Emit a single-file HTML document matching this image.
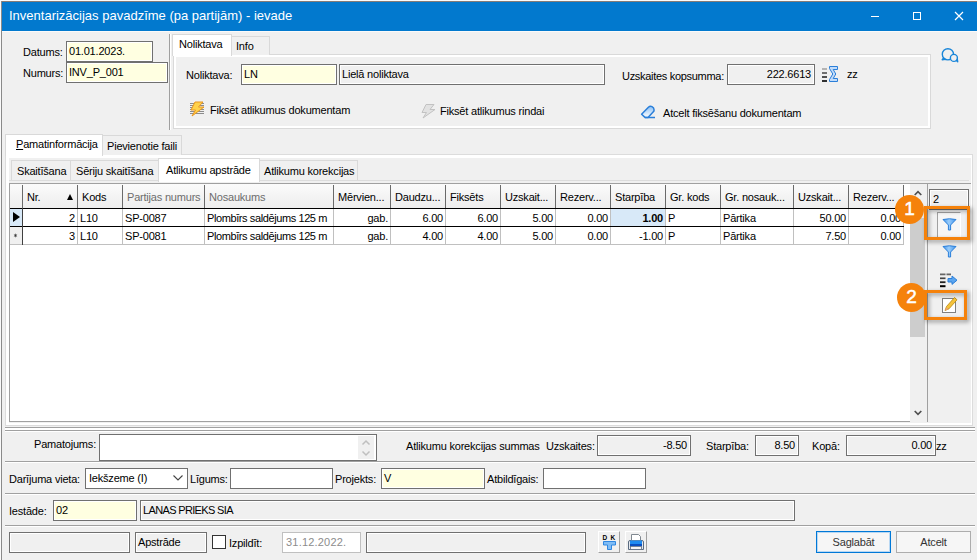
<!DOCTYPE html>
<html lang="lv">
<head>
<meta charset="utf-8">
<title>Inventarizācijas pavadzīme (pa partijām) - ievade</title>
<style>
*{box-sizing:border-box;margin:0;padding:0}
html,body{width:977px;height:560px;overflow:hidden;background:#f0f0f0}
body{position:relative;font-family:"Liberation Sans","DejaVu Sans",sans-serif;font-size:11px;color:#000;line-height:13px;letter-spacing:-0.2px}
.abs{position:absolute}
#win{position:absolute;left:0;top:0;width:977px;height:560px;background:#f0f0f0}
#title{position:absolute;left:0;top:0;width:977px;height:31px;background:#0279ce;color:#fff}
#title .t{position:absolute;left:9px;top:8px;font-size:13px;line-height:15px;white-space:nowrap;letter-spacing:0}
.lbl{position:absolute;white-space:nowrap;height:13px;line-height:13px}
.inp{position:absolute;height:21px;border:1px solid #707070;box-shadow:inset 0 0 0 1px #fff;background:#fff;padding:3px 0 0 2px;white-space:nowrap;overflow:hidden;line-height:13px}
.y{background:#ffffe1}
.g{background:#f0f0f0}
.r{text-align:right;padding-right:3px}
.hsep{position:absolute;left:5px;width:970px;height:2px;border-top:1px solid #a0a0a0;border-bottom:1px solid #fff}
.tab{position:absolute;border:1px solid #d9d9d9;border-bottom:none;background:#f0f0f0;white-space:nowrap;padding:3px 0 0 5px;height:20px}
.tab.sel{background:#fff;z-index:2}
#grid>div{position:absolute}
.gh{background:linear-gradient(#fbfbfb,#f4f4f4 50%,#eeeeee)}
.hc{top:0;height:24px;line-height:13px;padding:7px 0 0 4px;white-space:nowrap;overflow:hidden}
.c{height:17px;line-height:13px;padding:3px 0 0 2px;white-space:nowrap;overflow:hidden}
.c.r{text-align:right;padding-right:2px}
.vl{width:1px;background:#c0c0c0}
.hl{left:0;height:1px}
.call{width:29px;height:29px;border-radius:50%;background:#f5820b;color:#fff;font-size:19px;line-height:28px;text-align:center;letter-spacing:0;z-index:5;-webkit-text-stroke:0.5px #fff}
.btn3{width:22px;height:22px;background:#f0f0f0;border:1px solid #fff;border-right-color:#a0a0a0;border-bottom-color:#a0a0a0}
</style>
</head>
<body>
<div id="win"></div>
<div id="title"><span class="t">Inventarizācijas pavadzīme (pa partijām) - ievade</span>
<svg class="abs" style="left:870px;top:0" width="107" height="31" viewBox="0 0 107 31" fill="none" stroke="#fff" stroke-width="1">
<path d="M1 16.500h8"/><rect x="43.500" y="12.500" width="7" height="7"/><path d="M85 12l8 8M93 12l-8 8" stroke-width="1.200"/></svg>
</div>

<!-- window edges -->
<div class="abs" style="left:0;top:31px;width:977px;height:1px;background:#fafafa"></div>
<div class="abs" style="left:0;top:0;width:977px;height:1px;background:#fafafa;z-index:9"></div>
<div class="abs" style="left:1px;top:1px;width:976px;height:1px;background:#857c78;z-index:9"></div>
<div class="abs" style="left:0;top:0;width:1px;height:560px;background:#fafafa;z-index:9"></div>
<div class="abs" style="left:1px;top:1px;width:1px;height:559px;background:#8a8a8a;z-index:9"></div>
<!-- header left -->
<span class="lbl" style="left:23px;top:46px">Datums:</span>
<div class="inp y" style="left:66px;top:41px;width:87px">01.01.2023.</div>
<span class="lbl" style="left:23px;top:67px">Numurs:</span>
<div class="inp y" style="left:66px;top:62px;width:102px">INV_P_001</div>
<div class="abs" style="left:169px;top:34px;width:2px;height:96px;border-left:1px solid #a0a0a0;border-right:1px solid #fff"></div>

<!-- Noliktava tabs -->
<div class="abs" style="left:173px;top:54px;width:758px;height:75px;background:#fff;border:1px solid #d9d9d9"></div>
<div class="abs" style="left:176px;top:57px;width:752px;height:69px;background:#f0f0f0"></div>
<div class="tab sel" style="left:172px;top:34px;width:60px;height:22px;padding-top:3px;padding-left:6px">Noliktava</div>
<div class="tab" style="left:231px;top:36px;width:39px;height:19px;padding-left:4px;padding-top:3px">Info</div>

<span class="lbl" style="left:186px;top:69px">Noliktava:</span>
<div class="inp y" style="left:241px;top:64px;width:96px">LN</div>
<div class="inp g" style="left:339px;top:64px;width:266px">Lielā noliktava</div>
<span class="lbl" style="left:622px;top:70px;letter-spacing:-0.3px">Uzskaites kopsumma:</span>
<div class="inp g r" style="left:727px;top:64px;width:88px">222.6613</div>
<span class="lbl" style="left:847px;top:68px">zz</span>

<span class="lbl" style="left:210px;top:104px">Fiksēt atlikumus dokumentam</span>
<span class="lbl" style="left:440px;top:105px">Fiksēt atlikumus rindai</span>
<span class="lbl" style="left:663px;top:107px">Atcelt fiksēšanu dokumentam</span>

<!-- main tabs -->
<div class="abs" style="left:5px;top:154px;width:968px;height:272px;background:#fff;border:1px solid #dcdcdc"></div>
<div class="abs" style="left:9px;top:158px;width:962px;height:265px;background:#f0f0f0"></div>
<div class="tab sel" style="left:5px;top:134px;width:98px;height:22px;padding-top:3px;padding-left:10px"><u>P</u>amatinformācija</div>
<div class="tab" style="left:102px;top:135px;width:80px;height:20px;padding-top:4px;padding-left:4px">Pievienotie faili</div>

<!-- inner tabs -->
<div class="tab" style="left:11px;top:160px;width:60px;height:21px;padding-top:4px">Skaitīšana</div>
<div class="tab" style="left:70px;top:160px;width:89px;height:21px;padding-top:4px">Sēriju skaitīšana</div>
<div class="tab sel" style="left:158px;top:158px;width:102px;height:24px;padding-top:5px;padding-left:7px">Atlikumu apstrāde</div>
<div class="tab" style="left:258px;top:160px;width:100px;height:21px;padding-top:4px">Atlikumu korekcijas</div>
<div class="abs" style="left:9px;top:180px;width:960px;height:1px;background:#dcdcdc;z-index:1"></div>
<div class="abs" style="left:9px;top:183px;width:962px;height:1px;background:#a0a0a0"></div>

<!-- grid -->
<div id="grid" class="abs" style="left:9px;top:183px;width:919px;height:239px;background:#fff;border:1px solid #a0a0a0">
<!--GRID-->
<div class="gh" style="left:0;top:0;width:894px;height:24px"></div>
<div class="hc" style="left:13px;width:54px;color:#000">Nr.</div>
<div class="hc" style="left:68px;width:44px;color:#000">Kods</div>
<div class="hc" style="left:113px;width:81px;color:#6d6d6d">Partijas numurs</div>
<div class="hc" style="left:195px;width:128px;color:#6d6d6d">Nosaukums</div>
<div class="hc" style="left:324px;width:56px;color:#000">Mērvien...</div>
<div class="hc" style="left:381px;width:54px;color:#000">Daudzu...</div>
<div class="hc" style="left:436px;width:54px;color:#000">Fiksēts</div>
<div class="hc" style="left:491px;width:54px;color:#000">Uzskait...</div>
<div class="hc" style="left:546px;width:54px;color:#000">Rezerv...</div>
<div class="hc" style="left:601px;width:54px;color:#000">Starpība</div>
<div class="hc" style="left:656px;width:54px;color:#000">Gr. kods</div>
<div class="hc" style="left:711px;width:72px;color:#000">Gr. nosauk...</div>
<div class="hc" style="left:784px;width:54px;color:#000">Uzskait...</div>
<div class="hc" style="left:839px;width:54px;color:#000">Rezerv...</div>
<div class="vl" style="left:12px;top:1px;height:23px;background:#6a6a6a"></div>
<div class="vl" style="left:67px;top:1px;height:23px;background:#6a6a6a"></div>
<div class="vl" style="left:112px;top:1px;height:23px;background:#6a6a6a"></div>
<div class="vl" style="left:194px;top:1px;height:23px;background:#6a6a6a"></div>
<div class="vl" style="left:323px;top:1px;height:23px;background:#6a6a6a"></div>
<div class="vl" style="left:380px;top:1px;height:23px;background:#6a6a6a"></div>
<div class="vl" style="left:435px;top:1px;height:23px;background:#6a6a6a"></div>
<div class="vl" style="left:490px;top:1px;height:23px;background:#6a6a6a"></div>
<div class="vl" style="left:545px;top:1px;height:23px;background:#6a6a6a"></div>
<div class="vl" style="left:600px;top:1px;height:23px;background:#6a6a6a"></div>
<div class="vl" style="left:655px;top:1px;height:23px;background:#6a6a6a"></div>
<div class="vl" style="left:710px;top:1px;height:23px;background:#6a6a6a"></div>
<div class="vl" style="left:783px;top:1px;height:23px;background:#6a6a6a"></div>
<div class="vl" style="left:838px;top:1px;height:23px;background:#6a6a6a"></div>
<div class="vl" style="left:893px;top:1px;height:23px;background:#6a6a6a"></div>
<div style="left:57px;top:10px;width:0;height:0;border-left:3.5px solid transparent;border-right:3.5px solid transparent;border-bottom:6px solid #000"></div>
<div class="c r" style="left:13px;top:25px;width:54px">2</div>
<div class="c" style="left:68px;top:25px;width:44px">L10</div>
<div class="c" style="left:113px;top:25px;width:81px">SP-0087</div>
<div class="c" style="left:195px;top:25px;width:128px;letter-spacing:-0.4px">Plombīrs saldējums 125 m</div>
<div class="c r" style="left:324px;top:25px;width:56px">gab.</div>
<div class="c r" style="left:381px;top:25px;width:54px">6.00</div>
<div class="c r" style="left:436px;top:25px;width:54px">6.00</div>
<div class="c r" style="left:491px;top:25px;width:54px">5.00</div>
<div class="c r" style="left:546px;top:25px;width:54px">0.00</div>
<div class="c r" style="left:601px;top:25px;width:54px;background:#d8e9f8;font-weight:bold">1.00</div>
<div class="c" style="left:656px;top:25px;width:54px">P</div>
<div class="c" style="left:711px;top:25px;width:72px">Pārtika</div>
<div class="c r" style="left:784px;top:25px;width:54px">50.00</div>
<div class="c r" style="left:839px;top:25px;width:54px">0.00</div>
<div class="vl" style="left:12px;top:25px;height:17px"></div>
<div class="vl" style="left:67px;top:25px;height:17px"></div>
<div class="vl" style="left:112px;top:25px;height:17px"></div>
<div class="vl" style="left:194px;top:25px;height:17px"></div>
<div class="vl" style="left:323px;top:25px;height:17px"></div>
<div class="vl" style="left:380px;top:25px;height:17px"></div>
<div class="vl" style="left:435px;top:25px;height:17px"></div>
<div class="vl" style="left:490px;top:25px;height:17px"></div>
<div class="vl" style="left:545px;top:25px;height:17px"></div>
<div class="vl" style="left:600px;top:25px;height:17px"></div>
<div class="vl" style="left:655px;top:25px;height:17px"></div>
<div class="vl" style="left:710px;top:25px;height:17px"></div>
<div class="vl" style="left:783px;top:25px;height:17px"></div>
<div class="vl" style="left:838px;top:25px;height:17px"></div>
<div class="vl" style="left:893px;top:25px;height:17px"></div>
<div class="c r" style="left:13px;top:43px;width:54px">3</div>
<div class="c" style="left:68px;top:43px;width:44px">L10</div>
<div class="c" style="left:113px;top:43px;width:81px">SP-0081</div>
<div class="c" style="left:195px;top:43px;width:128px;letter-spacing:-0.4px">Plombīrs saldējums 125 m</div>
<div class="c r" style="left:324px;top:43px;width:56px">gab.</div>
<div class="c r" style="left:381px;top:43px;width:54px">4.00</div>
<div class="c r" style="left:436px;top:43px;width:54px">4.00</div>
<div class="c r" style="left:491px;top:43px;width:54px">5.00</div>
<div class="c r" style="left:546px;top:43px;width:54px">0.00</div>
<div class="c r" style="left:601px;top:43px;width:54px">-1.00</div>
<div class="c" style="left:656px;top:43px;width:54px">P</div>
<div class="c" style="left:711px;top:43px;width:72px">Pārtika</div>
<div class="c r" style="left:784px;top:43px;width:54px">7.50</div>
<div class="c r" style="left:839px;top:43px;width:54px">0.00</div>
<div class="vl" style="left:12px;top:43px;height:17px"></div>
<div class="vl" style="left:67px;top:43px;height:17px"></div>
<div class="vl" style="left:112px;top:43px;height:17px"></div>
<div class="vl" style="left:194px;top:43px;height:17px"></div>
<div class="vl" style="left:323px;top:43px;height:17px"></div>
<div class="vl" style="left:380px;top:43px;height:17px"></div>
<div class="vl" style="left:435px;top:43px;height:17px"></div>
<div class="vl" style="left:490px;top:43px;height:17px"></div>
<div class="vl" style="left:545px;top:43px;height:17px"></div>
<div class="vl" style="left:600px;top:43px;height:17px"></div>
<div class="vl" style="left:655px;top:43px;height:17px"></div>
<div class="vl" style="left:710px;top:43px;height:17px"></div>
<div class="vl" style="left:783px;top:43px;height:17px"></div>
<div class="vl" style="left:838px;top:43px;height:17px"></div>
<div class="vl" style="left:893px;top:43px;height:17px"></div>
<div style="left:0;top:25px;width:12px;height:17px;background:#d8e9f8"></div>
<div style="left:0;top:43px;width:12px;height:17px;background:#f0f0f0"></div>
<div class="hl" style="top:24px;width:894px;background:#000"></div>
<div class="hl" style="top:42px;width:894px;background:#000"></div>
<div class="hl" style="top:60px;width:894px;background:#c0c0c0"></div>
<div class="vl" style="left:12px;top:24px;height:37px;background:#404040"></div>
<div style="left:3px;top:28px;width:0;height:0;border-top:5px solid transparent;border-bottom:5px solid transparent;border-left:7.5px solid #000"></div>
<svg style="position:absolute;left:3px;top:49px" width="5" height="5" viewBox="0 0 7 7" stroke="#333" stroke-width="1" fill="none"><path d="M3.500 1V6M1.300 2.200L5.700 4.800M5.700 2.200L1.300 4.800"/></svg>
<!--/GRID-->
<div style="left:900px;top:0;width:17px;height:238px;background:#f0f0f0"></div>
<div style="left:900px;top:34px;width:15px;height:119px;background:#cdcdcd"></div>
<svg style="position:absolute;left:900px;top:0" width="17" height="238" viewBox="0 0 17 238" fill="none" stroke="#505050" stroke-width="1.700"><path d="M4.700 11L8 7.700L11.300 11M4.700 227L8 230.300L11.300 227"/></svg>

</div>

<!-- bottom -->
<div class="hsep" style="top:427px"></div>
<div class="abs" style="left:5px;top:429px;width:970px;height:1px;background:#fff"></div>
<div class="hsep" style="top:430px"></div>
<span class="lbl" style="left:34px;top:438px">Pamatojums:</span>
<div class="inp" style="left:99px;top:434px;width:278px;height:27px"></div>
<span class="lbl" style="left:406px;top:440px">Atlikumu korekcijas summas</span>
<span class="lbl" style="left:546px;top:440px">Uzskaites:</span>
<div class="inp g r" style="left:597px;top:435px;width:94px">-8.50</div>
<span class="lbl" style="left:706px;top:440px">Starpība:</span>
<div class="inp g r" style="left:755px;top:435px;width:44px">8.50</div>
<span class="lbl" style="left:812px;top:440px">Kopā:</span>
<div class="inp g r" style="left:846px;top:435px;width:90px">0.00</div>
<span class="lbl" style="left:936px;top:440px">zz</span>

<div class="hsep" style="top:461px"></div>
<span class="lbl" style="left:9px;top:473px">Darījuma vieta:</span>
<div class="inp" style="left:85px;top:468px;width:103px;padding-left:3px">Iekšzeme (I)</div>
<span class="lbl" style="left:190px;top:473px">Līgums:</span>
<div class="inp" style="left:230px;top:468px;width:103px"></div>
<span class="lbl" style="left:335px;top:473px">Projekts:</span>
<div class="inp y" style="left:381px;top:468px;width:104px">V</div>
<span class="lbl" style="left:487px;top:473px">Atbildīgais:</span>
<div class="inp" style="left:543px;top:468px;width:103px"></div>

<div class="hsep" style="top:493px"></div>
<span class="lbl" style="left:9px;top:505px">Iestāde:</span>
<div class="inp y" style="left:53px;top:500px;width:84px">02</div>
<div class="inp g" style="left:140px;top:500px;width:655px;letter-spacing:-0.65px">LANAS PRIEKS SIA</div>

<div class="hsep" style="top:525px"></div>
<div class="inp g" style="left:9px;top:532px;width:121px"></div>
<div class="inp g" style="left:135px;top:532px;width:72px">Apstrāde</div>
<div class="abs" style="left:212px;top:535px;width:14px;height:14px;border:1px solid #333;background:#fff"></div>
<span class="lbl" style="left:229px;top:537px">Izpildīt:</span>
<div class="inp" style="left:282px;top:532px;width:79px;color:#8c8c8c;border-color:#c0c0c0;letter-spacing:0.2px;padding-left:3px">31.12.2022.</div>
<div class="inp g" style="left:366px;top:532px;width:220px"></div>
<div class="abs" style="left:816px;top:531px;width:75px;height:22px;border:1px solid #0078d7;box-shadow:inset 0 0 0 1px #b9d8f3;background:#f6f6f6;color:#333;text-align:center;padding-top:4px">Saglabāt</div>
<div class="abs" style="left:896px;top:531px;width:75px;height:22px;border:1px solid #adadad;background:#f6f6f6;color:#333;text-align:center;padding-top:4px">Atcelt</div>

<!-- ICONS -->
<svg class="abs" style="left:940px;top:46px" width="22" height="18" viewBox="0 0 22 18" fill="none" stroke="#1a86d9" stroke-width="1.4" stroke-linejoin="round" stroke-linecap="round">
<circle cx="7.900" cy="8.300" r="5.600"/><path d="M3.600 12L2.200 13.700L5.600 13.400"/>
<circle cx="13.900" cy="11.900" r="3.500" fill="#f0f0f0"/><path d="M16.300 14.500L17.700 15.700L17.300 13.300"/></svg>

<svg class="abs" style="left:821px;top:65px" width="18" height="18" viewBox="0 0 18 18">
<rect x="1" y="3" width="5" height="2" fill="#b4b4b4"/><rect x="1" y="7" width="5" height="2" fill="#707070"/><rect x="1" y="11" width="5" height="2" fill="#505050"/><rect x="1" y="15" width="5" height="2" fill="#303030"/>
<path d="M8.5 1.5H16.5V4.5H12.2L14.8 9L12.2 13.5H16.5V16.5H8.5V14.5L11.8 9L8.5 3.5Z" fill="#c2dcfa" stroke="#2b7fd9" stroke-width="1"/></svg>

<svg class="abs" style="left:189px;top:101px" width="16" height="16" viewBox="0 0 16 16">
<path d="M1 2.5H15M1 4.5H15M1 6.5H15M1 8.5H15M1 10.5H15M1 12.5H15" stroke="#8c8c8c" stroke-width="1"/>
<path d="M6 1H14L9.5 6H15L3 15L6.5 9H2Z" fill="#ffd24a" stroke="#e8961e" stroke-width="1" stroke-linejoin="round"/></svg>

<svg class="abs" style="left:421px;top:103px" width="16" height="16" viewBox="0 0 16 16">
<path d="M5 1.5H13L9 6.5H14L2 15L5.5 9.5H1Z" fill="#e2e2e2" stroke="#c2c2c2" stroke-width="1" stroke-linejoin="round"/></svg>

<svg class="abs" style="left:640px;top:104px" width="17" height="16" viewBox="0 0 17 16">
<defs><linearGradient id="er" x1="0" y1="0" x2="0" y2="1"><stop offset="0" stop-color="#8cc0f5"/><stop offset="1" stop-color="#fff"/></linearGradient></defs>
<path d="M1.6 10.2L8.4 3.2Q10 1.8 12 2.6Q14 3.6 14 5.6V7L8 13.4H5Z" fill="url(#er)" stroke="#2b7fd9" stroke-width="1.5" stroke-linejoin="round"/>
<path d="M5 13.5H15" stroke="#2b7fd9" stroke-width="1.5"/></svg>

<!-- right toolbar -->
<svg width="0" height="0" style="position:absolute"><defs><linearGradient id="fg" x1="0" y1="0" x2="1" y2="0"><stop offset="0" stop-color="#3f94ee"/><stop offset=".45" stop-color="#9acdfb"/><stop offset="1" stop-color="#3f94ee"/></linearGradient></defs></svg>
<div class="inp g" style="left:929px;top:189px;width:40px;height:21px;padding-left:3px">2</div>
<div class="abs" style="left:937px;top:212px;width:24px;height:26px;border:1px solid #a0a0a0;border-right-color:#fff;border-bottom-color:#fff;background:#f6f6f6"></div>
<svg class="abs" style="left:942px;top:218px" width="15" height="13" viewBox="0 0 15 13"><path d="M1 1.500Q7.500 0 14 1.500L8.600 7V12H6.400V7Z" fill="url(#fg)" stroke="#2b7fd9" stroke-width="1" stroke-linejoin="round"/></svg>
<svg class="abs" style="left:942px;top:245px" width="15" height="13" viewBox="0 0 15 13"><path d="M1 1.500Q7.500 0 14 1.500L8.600 7V12H6.400V7Z" fill="url(#fg)" stroke="#2b7fd9" stroke-width="1" stroke-linejoin="round"/></svg>
<svg class="abs" style="left:939px;top:272px" width="19" height="16" viewBox="0 0 19 16">
<path d="M1 2.400H6.500M7.500 2.400H12" stroke="#666" stroke-width="1.700"/><path d="M1 6.300H6.500" stroke="#444" stroke-width="1.700"/><path d="M1 10.200H6.500" stroke="#222" stroke-width="1.800"/><path d="M1 14.200H6.500" stroke="#000" stroke-width="2"/>
<path d="M9 6.500H13V4L18 8.200L13 12.400V10H9Z" fill="#5aa5f0" stroke="#2b7fd9" stroke-width="1"/></svg>
<svg class="abs" style="left:941px;top:296px" width="18" height="18" viewBox="0 0 18 18">
<rect x="1.500" y="2.500" width="13" height="14" fill="#fff" stroke="#808080"/>
<path d="M4 14.500L5.500 10.500L13.500 1.500L16 3.800L8 12.800Z" fill="#f5c33b" stroke="#b8860b" stroke-width=".8" stroke-linejoin="round"/><path d="M4 14.500L5.300 11.200L7.400 13.200Z" fill="#e8a27a"/></svg>
<!-- callouts -->
<div class="abs" style="left:924px;top:206px;width:46px;height:34px;border:3px solid #f5820b;filter:drop-shadow(2px 2px 2px rgba(0,0,0,.4))"></div>
<div class="abs call" style="left:895px;top:195px">1</div>
<div class="abs" style="left:924px;top:290px;width:43px;height:30px;border:3px solid #f5820b;filter:drop-shadow(2px 2px 2px rgba(0,0,0,.4))"></div>
<div class="abs call" style="left:897px;top:283px">2</div>

<!-- bottom icons -->
<div class="abs btn3" style="left:598px;top:531px"></div>
<svg class="abs" style="left:598px;top:531px" width="22" height="22" viewBox="0 0 22 22"><text x="4.600" y="9" font-family="Liberation Sans,sans-serif" font-size="6.500" font-weight="bold" fill="#000" letter-spacing="3.300">DK</text>
<path d="M5.500 10.500H17.500V14H13.500V18.500H9.500V14H5.500Z" fill="#7fbcf5" stroke="#2f86e0" stroke-width="1" stroke-linejoin="round"/></svg>
<div class="abs btn3" style="left:625px;top:531px"></div>
<svg class="abs" style="left:625px;top:531px" width="22" height="22" viewBox="0 0 22 22">
<path d="M3.500 18.500V11Q3.500 9.500 5 9.500H17Q18.500 9.500 18.500 11V18.500Z" fill="#e4e8ee" stroke="#5a6b80" stroke-width="1"/>
<path d="M6.500 9.500V3.500H13.500L15.500 5.500V9.500Z" fill="#fff" stroke="#808890" stroke-width="1"/>
<rect x="5" y="9.500" width="12" height="5.500" fill="#1e8bf0"/><rect x="5" y="13" width="12" height="2" fill="#0a4fc0"/>
<rect x="5.500" y="15.500" width="11" height="3" fill="#f4f4f4" stroke="#5a6b80" stroke-width=".8"/></svg>

<!-- combobox arrow, textarea scroll, checkbox -->
<svg class="abs" style="left:172px;top:474px" width="12" height="8" viewBox="0 0 12 8" fill="none" stroke="#444" stroke-width="1.100"><path d="M1.500 1.500L6 6L10.500 1.500"/></svg>
<div class="abs" style="left:358px;top:436px;width:16px;height:23px;background:#f0f0f0"></div>
<svg class="abs" style="left:358px;top:436px" width="16" height="23" viewBox="0 0 16 23" fill="none" stroke="#bfbfbf" stroke-width="1.500"><path d="M4.500 8.500L8 5L11.500 8.500M4.500 15.500L8 19L11.500 15.500"/></svg>
</body>
</html>
